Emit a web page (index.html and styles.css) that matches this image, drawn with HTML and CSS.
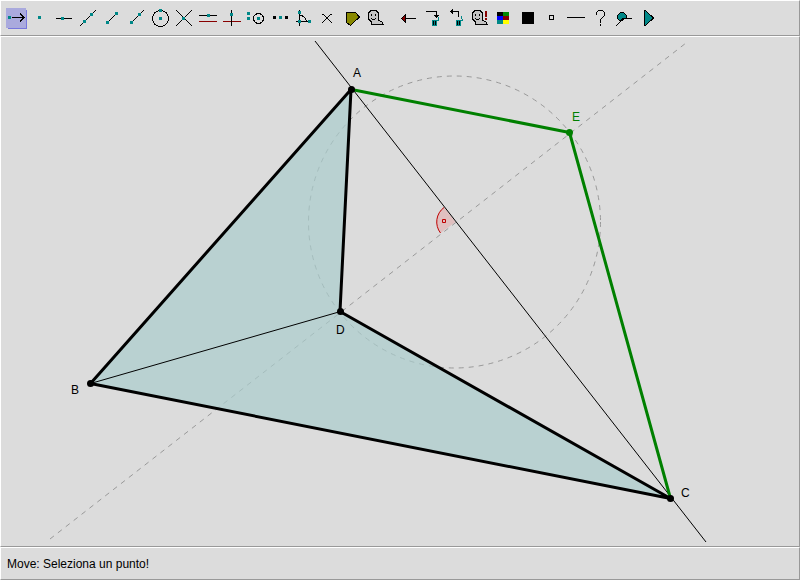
FILE: index.html
```html
<!DOCTYPE html>
<html lang="it">
<head>
  <meta charset="UTF-8" />
  <meta name="viewport" content="width=device-width, initial-scale=1.0"/>
  <title>Move</title>
  <link rel="stylesheet" href="styles.css">
</head>
<body>
  <div class="panel toolbar" role="toolbar">
    <!-- Construction tools -->
    <div class="tools">
      <button class="tool active"><svg viewBox="0 0 24 24"><path class="line" d="M8 11.500h12M16 7.500l4 4-4 4"/><path class="dot" d="M4 10h3v3h-3z"/></svg></button>
      <button class="tool"><svg viewBox="0 0 24 24"><path class="dot" d="M10 10h3v3h-3z"/></svg></button>
      <button class="tool"><svg viewBox="0 0 24 24"><path class="line" d="M4 12.500h16"/><path class="dot" d="M9 11h3v3h-3z"/></svg></button>
      <button class="tool"><svg viewBox="0 0 24 24"><path class="line" d="M4 20L20 4"/><path class="dot" d="M7 14h3v3h-3zM14 7h3v3h-3z"/></svg></button>
      <button class="tool"><svg viewBox="0 0 24 24"><path class="line" d="M7.500 16.500l9-9"/><path class="dot" d="M6 15h3v3h-3zM15 6h3v3h-3z"/></svg></button>
      <button class="tool"><svg viewBox="0 0 24 24"><path class="line" d="M7.500 16.500L20 4"/><path class="dot" d="M6 15h3v3h-3zM14 7h3v3h-3z"/></svg></button>
      <button class="tool"><svg viewBox="0 0 24 24"><circle class="line" cx="12.500" cy="12.500" r="8"/><path class="dot" d="M11 11h3v3h-3zM11 3h3v3h-3z"/></svg></button>
      <button class="tool"><svg viewBox="0 0 24 24"><path class="line" d="M4 4l16 16M4 20L20 4"/><path class="dot" d="M10 11h3v3h-3z"/></svg></button>
      <button class="tool"><svg viewBox="0 0 24 24"><path class="line" d="M3 9.500h18"/><path class="line red" d="M3 15.500h18"/><path class="dot" d="M11 8h3v3h-3z"/></svg></button>
      <button class="tool"><svg viewBox="0 0 24 24"><path class="line red" d="M3 15.500h18"/><path class="line" d="M11.500 4v16"/><path class="dot" d="M10 7h3v3h-3z"/></svg></button>
      <button class="tool"><svg viewBox="0 0 24 24"><circle class="line" cx="14.500" cy="12.500" r="5"/><path class="dot" d="M3 6h3v3h-3zM3 11h3v3h-3zM13 11h3v3h-3z"/></svg></button>
      <button class="tool"><svg viewBox="0 0 24 24"><path d="M5 10h3v3h-3zM17 10h3v3h-3z"/><path class="dot" d="M11 10h3v3h-3z"/></svg></button>
      <button class="tool"><svg viewBox="0 0 24 24"><path class="line" d="M7.500 4v16M4 15.500h15M7.500 9.500q6 0 7 6"/><path class="dot" d="M6 5h3v3h-3zM6 14h3v3h-3zM16 14h3v3h-3z"/></svg></button>
      <button class="tool"><svg viewBox="0 0 24 24"><path class="line" d="M6 8h1l8 8h1M6 16h1l8-8h1"/></svg></button>
      <button class="tool"><svg viewBox="0 0 24 24"><path class="line olive" d="M6.500 6.500h9l4 4.500-9 8.500-4-3z"/></svg></button>
      <button class="tool"><svg viewBox="0 0 24 24"><path class="line ghost" d="M7.500 4.500h4l2 1 1 2v7l3 1 2 3h-12v-3l-2-1-1-2v-5l1-2z"/><path d="M7 8h1v2h-1zM11 8h1v2h-1zM7 12h1v1h3v-1h1v1h-1v1h-3v-1h-1z"/></svg></button>
    </div>
    <!-- Editing and display options -->
    <div class="tools">
      <button class="tool"><svg viewBox="0 0 24 24"><path class="line" d="M9 12.500h11"/><path class="line red-fill" d="M5.500 12.500l4-4v8z"/></svg></button>
      <button class="tool"><svg viewBox="0 0 24 24"><path class="line" d="M6 5.500h10.500v6"/><path d="M14 9h5v1h-1v1h-1v1h-1v-1h-1v-1h-1z"/><path class="line teal" d="M18.500 10.500v4l-1 1M12 14.500h6"/><path class="dot" d="M12 15h5v5h-5z"/><path d="M13 15h1v4h-1zM15 15h1v4h-1z"/></svg></button>
      <button class="tool"><svg viewBox="0 0 24 24"><path class="line" d="M14.500 11v-5.500H6"/><path d="M6 5h1v-1h1v-1h1v5h-1v-1h-1v-1h-1z"/><path class="line teal" d="M17.500 10.500l1 4-1 1M12 14.500h6"/><path class="dot" d="M12 15h5v5h-5z"/><path d="M13 15h1v4h-1zM15 15h1v4h-1z"/></svg></button>
      <button class="tool"><svg viewBox="0 0 24 24"><path class="line ghost" d="M7.500 4.500h4l2 1 1 2v7l3 1 2 3h-12v-3l-2-1-1-2v-5l1-2z"/><path d="M7 8h1v2h-1zM11 8h1v2h-1zM7 12h1v1h3v-1h1v1h-1v1h-3v-1h-1z"/><path class="mark" d="M17 5h2v6h-2zM17 12h2v2h-2z"/></svg></button>
      <button class="tool"><svg viewBox="0 0 24 24"><path d="M5 6h6v4h-6z"/><path fill="#008800" d="M11 6h6v4h-6z"/><path fill="#0000ff" d="M5 10h6v4h-6z"/><path fill="#880000" d="M11 10h6v4h-6z"/><path fill="#008888" d="M5 14h6v4h-6z"/><path fill="#ffff00" d="M11 14h6v4h-6z"/></svg></button>
      <button class="tool"><svg viewBox="0 0 24 24"><path d="M6 6h12v12h-12z"/></svg></button>
      <button class="tool"><svg viewBox="0 0 24 24"><path class="line" d="M9.500 9.500h4v4h-4z"/></svg></button>
      <button class="tool"><svg viewBox="0 0 24 24"><path class="line" d="M3 11.500h18"/></svg></button>
      <button class="tool"><svg viewBox="0 0 24 24"><path class="line" d="M8.500 8.500v-2l2-2h4l2 2v3l-4 4v3M12.500 18v2"/></svg></button>
      <button class="tool"><svg viewBox="0 0 24 24"><path class="line teal-fill" d="M7.500 14.500l-2-2v-3l3-3h3l3 3v3h-3l-1 2z"/><path class="line" d="M4 20l7-7.500h9"/></svg></button>
      <button class="tool"><svg viewBox="0 0 24 24"><path class="line teal-fill" d="M8.500 4.500h1l8 7.500-8 7.500h-1z"/></svg></button>
    </div>
  </div>

  <main class="panel canvas">
    <svg class="drawing" viewBox="1 37 798 509">
      <!-- Helper lines -->
      <circle class="helper" cx="454.500" cy="222" r="146"/>
      <path class="helper" d="M50 539L686 43"/>

      <path class="angle-fill" d="M455.500 222L444 207A18.500 18.500 0 0 0 440.500 233z"/>
      <path class="angle" d="M444 207.500A18 18 0 0 0 440.500 233M442.500 219.500h3v3h-3z"/>

      <path class="area" d="M351.500 89.500L340.500 311.500L670.500 498.500L90.500 383.500z"/>
      <path class="thin" d="M315 41L706 542M90.500 383.500L340.500 311.500"/>
      <path class="green" d="M351.500 89.500L569.500 132.500L670.500 498.500"/>
      <path class="thick" d="M351 89.500L340 311.500L670.500 498.500L90.500 383.500z"/>

      <circle cx="351.500" cy="89.500" r="3.500"/>
      <circle cx="90.500" cy="383.500" r="3.500"/>
      <circle cx="670.500" cy="498.500" r="3.500"/>
      <circle cx="340.500" cy="311.500" r="3.500"/>
      <circle class="green-point" cx="569.500" cy="132.500" r="3.500"/>

      <text x="353" y="77">A</text>
      <text x="71" y="394">B</text>
      <text x="681" y="497">C</text>
      <text x="336" y="334">D</text>
      <text class="green-label" x="572" y="121">E</text>
    </svg>
  </main>

  <footer class="panel status">Move: Seleziona un punto!</footer>

  <script>
    const tools = document.querySelectorAll(".tool");

    tools.forEach(tool => {
      tool.addEventListener("click", () => {
        document.querySelector(".tool.active").classList.remove("active");
        tool.classList.add("active");
      });
    });
  </script>
</body>
</html>
```

FILE: styles.css
```css
* {
  box-sizing: border-box;
  margin: 0;
  padding: 0;
}

body {
  display: flex;
  flex-direction: column;
  height: 100vh;
  background-color: #dcdcdc;
  color: #000;
  font-family: "Liberation Sans", Arial, sans-serif;
  font-size: 12px;
}

.panel {
  border: 1px solid;
  border-color: #fff #999 #999 #fff;
}

/* Toolbar */
.toolbar {
  display: flex;
  flex-wrap: wrap;
  gap: 8px;
  padding: 5px 3px;
}

.tools {
  display: flex;
}

.tool {
  width: 24px;
  height: 24px;
  border: none;
  background: none;
}

.tool svg {
  display: block;
  width: 24px;
  height: 24px;
  shape-rendering: crispEdges;
}

.tool.active {
  background: linear-gradient(#aaaadd, #aaaadd) 2px 2px / 20px 20px no-repeat,
    linear-gradient(#7777dd, #7777dd) 4px 4px / 19px 19px no-repeat;
}

.line {
  fill: none;
  stroke: #000;
}

.dot {
  fill: #008888;
}

.red {
  stroke: #880000;
}

.teal {
  stroke: #008888;
}

.mark,
.red-fill {
  fill: #880000;
}

.teal-fill {
  fill: #008888;
}

.olive {
  fill: #888800;
}

.ghost {
  fill: #c4c4c4;
}

/* Drawing area */
.canvas {
  flex: 1;
  min-height: 0;
}

.drawing {
  display: block;
  width: 100%;
  height: 100%;
}

.helper {
  fill: none;
  stroke: #999;
  stroke-dasharray: 5 5;
}

.thin {
  fill: none;
  stroke: #000;
}

.thick,
.green {
  fill: none;
  stroke: #000;
  stroke-width: 3;
  stroke-linejoin: round;
}

.green {
  stroke: #008000;
}

.area {
  fill: rgba(170, 204, 204, 0.7);
}

.angle {
  fill: none;
  stroke: #c00000;
}

.angle-fill {
  fill: rgba(255, 0, 0, 0.13);
}

.green-point,
.green-label {
  fill: #008000;
}

/* Status line */
.status {
  padding: 10px 6px 8px;
  line-height: 13px;
}
```
